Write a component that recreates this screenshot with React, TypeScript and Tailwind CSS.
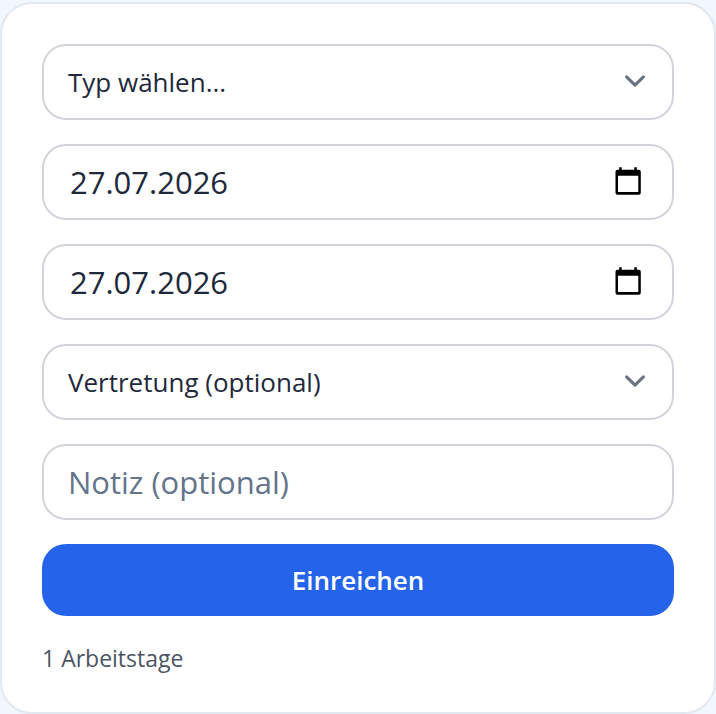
import type { ReactNode } from "react";

const fieldClass =
  "block h-[76px] w-full appearance-none rounded-3xl border-2 border-[#d1d5db] bg-white text-[#1e293b] outline-none focus:border-blue-600";

function ChevronIcon() {
  return (
    <svg
      viewBox="0 0 20 20"
      fill="none"
      aria-hidden="true"
      className="pointer-events-none absolute right-[18px] top-4 size-[42px]"
    >
      <path
        d="M6 8l4 4 4-4"
        stroke="#6b7280"
        strokeWidth="1.5"
        strokeLinecap="round"
        strokeLinejoin="round"
      />
    </svg>
  );
}

function CalendarIcon() {
  return (
    <svg viewBox="0 0 26 28" fill="#000" aria-hidden="true" className="h-7 w-[26px]">
      <path
        fillRule="evenodd"
        d="M4.200 0.300h2.500v2.500h12.600V0.300h2.500v2.500h2A2 2 0 0 1 25.800 4.800v21a2 2 0 0 1-2 2h-21.300a2 2 0 0 1-2-2v-21a2 2 0 0 1 2-2h1.700zM3 8.800v16.300h20.300V8.800z"
      />
    </svg>
  );
}

function SelectField({ label, children }: { label: string; children: ReactNode }) {
  return (
    <div className="relative">
      <select aria-label={label} className={`${fieldClass} pl-6 pr-16 text-[26px]`}>
        {children}
      </select>
      <ChevronIcon />
    </div>
  );
}

function DateField({ label }: { label: string }) {
  return (
    <div className="relative">
      <input
        type="text"
        inputMode="numeric"
        aria-label={label}
        defaultValue="27.07.2026"
        className={`${fieldClass} pl-[26px] pr-20 text-[31px]`}
      />
      <button
        type="button"
        aria-label={`${label} auswählen`}
        className="absolute inset-y-0 right-[33px] flex items-center pb-0.5"
      >
        <CalendarIcon />
      </button>
    </div>
  );
}

export default function App() {
  return (
    <div className="min-h-screen bg-[#f2f7fe] pt-0.5 font-['Open_Sans','Noto_Sans',sans-serif]">
      <form
        onSubmit={(e) => e.preventDefault()}
        className="flex flex-col gap-6 rounded-[32px] border-2 border-[#e2e8f0] bg-white px-10 pt-10 pb-9"
      >
        <SelectField label="Typ">
          <option>Typ wählen...</option>
          <option>Urlaub</option>
        </SelectField>
        <DateField label="Von" />
        <DateField label="Bis" />
        <SelectField label="Vertretung">
          <option>Vertretung (optional)</option>
        </SelectField>
        <input
          type="text"
          aria-label="Notiz"
          placeholder="Notiz (optional)"
          className={`${fieldClass} px-6 text-[31px] placeholder:text-[#64748b]`}
        />
        <button
          type="submit"
          className="h-[72px] rounded-3xl bg-[#2563eb] text-[26px] font-semibold text-white"
        >
          Einreichen
        </button>
        <p className="text-[23px] leading-9 text-[#4b5563]">1 Arbeitstage</p>
      </form>
    </div>
  );
}
